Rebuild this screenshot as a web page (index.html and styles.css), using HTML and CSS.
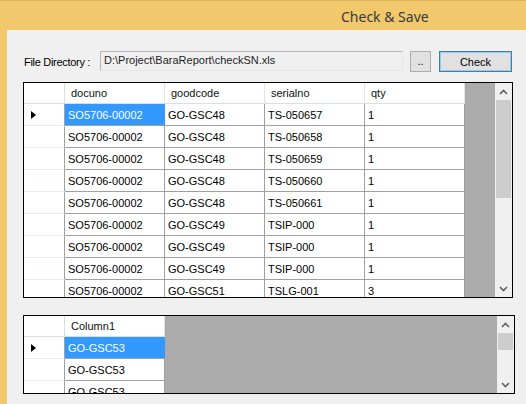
FILE: index.html
```html
<!DOCTYPE html>
<html lang="en">
<head>
  <meta charset="UTF-8">
  <title>Check &amp; Save</title>
  <link rel="stylesheet" href="styles.css">
</head>
<body>
  <div class="titlebar">
    <span class="title">Check &amp; Save</span>
  </div>

  <div class="client">
    <div class="toolbar">
      <span class="dir-label">File Directory :</span>
      <div class="path">D:\Project\BaraReport\checkSN.xls</div>
      <button class="browse-btn">..</button>
      <button class="check-btn">Check</button>
    </div>

    <!-- main result grid -->
    <div class="grid grid-main">
      <div class="cells">
        <div class="rows cols-main">
          <div class="row head">
            <div class="rh"></div>
            <div class="hc">docuno</div>
            <div class="hc">goodcode</div>
            <div class="hc">serialno</div>
            <div class="hc">qty</div>
          </div>
          <div class="row">
            <div class="rh"><span class="arrow"></span></div>
            <div class="c sel">SO5706-00002</div><div class="c">GO-GSC48</div><div class="c">TS-050657</div><div class="c">1</div>
          </div>
          <div class="row">
            <div class="rh"></div>
            <div class="c">SO5706-00002</div><div class="c">GO-GSC48</div><div class="c">TS-050658</div><div class="c">1</div>
          </div>
          <div class="row">
            <div class="rh"></div>
            <div class="c">SO5706-00002</div><div class="c">GO-GSC48</div><div class="c">TS-050659</div><div class="c">1</div>
          </div>
          <div class="row">
            <div class="rh"></div>
            <div class="c">SO5706-00002</div><div class="c">GO-GSC48</div><div class="c">TS-050660</div><div class="c">1</div>
          </div>
          <div class="row">
            <div class="rh"></div>
            <div class="c">SO5706-00002</div><div class="c">GO-GSC48</div><div class="c">TS-050661</div><div class="c">1</div>
          </div>
          <div class="row">
            <div class="rh"></div>
            <div class="c">SO5706-00002</div><div class="c">GO-GSC49</div><div class="c">TSIP-000</div><div class="c">1</div>
          </div>
          <div class="row">
            <div class="rh"></div>
            <div class="c">SO5706-00002</div><div class="c">GO-GSC49</div><div class="c">TSIP-000</div><div class="c">1</div>
          </div>
          <div class="row">
            <div class="rh"></div>
            <div class="c">SO5706-00002</div><div class="c">GO-GSC49</div><div class="c">TSIP-000</div><div class="c">1</div>
          </div>
          <div class="row">
            <div class="rh"></div>
            <div class="c">SO5706-00002</div><div class="c">GO-GSC51</div><div class="c">TSLG-001</div><div class="c">3</div>
          </div>
        </div>
      </div>
      <div class="vscroll">
        <div class="sb-btn"><svg width="9" height="6" viewBox="0 0 9 6"><path d="M1 5 L4.5 1.5 L8 5" fill="none" stroke="#606060" stroke-width="1.6"/></svg></div>
        <div class="sb-track"><div class="thumb thumb-main"></div></div>
        <div class="sb-btn"><svg width="9" height="6" viewBox="0 0 9 6"><path d="M1 1 L4.5 4.5 L8 1" fill="none" stroke="#606060" stroke-width="1.6"/></svg></div>
      </div>
    </div>

    <!-- missing codes grid -->
    <div class="grid grid-small">
      <div class="cells">
        <div class="rows cols-small">
          <div class="row head">
            <div class="rh"></div>
            <div class="hc">Column1</div>
          </div>
          <div class="row">
            <div class="rh"><span class="arrow"></span></div>
            <div class="c sel">GO-GSC53</div>
          </div>
          <div class="row">
            <div class="rh"></div>
            <div class="c">GO-GSC53</div>
          </div>
          <div class="row">
            <div class="rh"></div>
            <div class="c">GO-GSC53</div>
          </div>
        </div>
      </div>
      <div class="vscroll">
        <div class="sb-btn"><svg width="9" height="6" viewBox="0 0 9 6"><path d="M1 5 L4.5 1.5 L8 5" fill="none" stroke="#606060" stroke-width="1.6"/></svg></div>
        <div class="sb-track"><div class="thumb thumb-small"></div></div>
        <div class="sb-btn"><svg width="9" height="6" viewBox="0 0 9 6"><path d="M1 1 L4.5 4.5 L8 1" fill="none" stroke="#606060" stroke-width="1.6"/></svg></div>
      </div>
    </div>
  </div>
</body>
</html>
```

FILE: styles.css
```css
body {
  margin: 0;
  height: 404px;
  overflow: hidden;
  background-color: #f1c86c;
  font-family: "Liberation Sans", Arial, sans-serif;
  font-size: 11px;
  color: #000;
}

/* window title */
.titlebar {
  height: 30px;
  display: flex;
  align-items: center;
  padding-left: 341px;
  box-sizing: border-box;
  border-top: 1px solid #d9b25c;
}

.title {
  font-family: "Noto Sans", sans-serif;
  font-size: 14px;
  color: #3a3a3a;
  margin-top: 1px;
}

.client {
  margin-left: 7px;
  height: 374px;
  background-color: #f0f0f0;
  padding-left: 16px;
  padding-top: 21px;
  box-sizing: border-box;
}

/* path row */
.toolbar {
  display: flex;
  align-items: flex-start;
  height: 21px;
}

.dir-label {
  width: 77px;
  padding-left: 1px;
  box-sizing: border-box;
  line-height: 20px;
  margin-top: 1px;
  letter-spacing: -0.3px;
  white-space: nowrap;
}

.path {
  width: 303px;
  height: 20px;
  box-sizing: border-box;
  border: 1px solid #b8b8b8;
  border-right-color: #e6e6e6;
  border-bottom-color: #e6e6e6;
  padding-left: 3px;
  line-height: 17px;
  color: #1e1e1e;
}

.toolbar button {
  font-family: inherit;
  font-size: 11px;
  height: 21px;
  padding: 0;
  background-color: #e1e1e1;
  color: #000;
}

.browse-btn {
  width: 21px;
  margin-left: 7px;
  border: 1px solid #adadad;
  line-height: 19px;
}

.check-btn {
  width: 73px;
  margin-left: 8px;
  border: 1px solid #3c7fb1;
  box-shadow: inset 0 0 0 1px #9cc8ef;
}

/* data grids */
.grid {
  display: flex;
  border: 1px solid #000;
  box-sizing: border-box;
  background-color: #ababab;
}

.grid-main {
  margin-top: 10px;
  width: 490px;
  height: 216px;
}

.grid-small {
  margin-top: 17px;
  width: 492px;
  height: 79px;
}

.cells {
  flex: 1;
  overflow: hidden;
}

.rows {
  background-color: #fff;
}

.cols-main { width: 441px; }
.cols-small { width: 141px; }

.row {
  display: grid;
  height: 22px;
}

.cols-main .row { grid-template-columns: 41px 100px 100px 100px 100px; }
.cols-small .row { grid-template-columns: 41px 100px; }

.row.head { height: 21px; }

.rh {
  border-right: 1px solid #a0a0a0;
  border-bottom: 1px solid #e3eaf2;
  display: flex;
  align-items: center;
  padding-left: 7px;
}

.head .rh {
  border-right-color: #d9dee4;
  border-bottom-color: #d9dee4;
}

.hc {
  border-right: 1px solid #dfe4ea;
  border-bottom: 1px solid #d9dee4;
  padding-left: 6px;
  line-height: 20px;
  color: #111;
}

.c {
  border-right: 1px solid #a0a0a0;
  border-bottom: 1px solid #a0a0a0;
  padding-left: 3px;
  line-height: 22px;
  white-space: nowrap;
  overflow: hidden;
}

.c.sel {
  background-color: #3399ff;
  color: #fff;
  border-right-color: #3399ff;
}

.arrow {
  width: 0;
  height: 0;
  border-left: 5px solid #000;
  border-top: 4px solid transparent;
  border-bottom: 4px solid transparent;
  margin-top: 1px;
}

/* scrollbar */
.vscroll {
  width: 17px;
  display: flex;
  flex-direction: column;
  background-color: #f0f0f0;
}

.sb-btn {
  height: 17px;
  display: flex;
  align-items: center;
  justify-content: center;
}

.sb-track {
  flex: 1;
  padding: 0 1px;
}

.thumb {
  background-color: #cdcdcd;
}

.thumb-main { height: 98px; }
.thumb-small { height: 17px; }
```
